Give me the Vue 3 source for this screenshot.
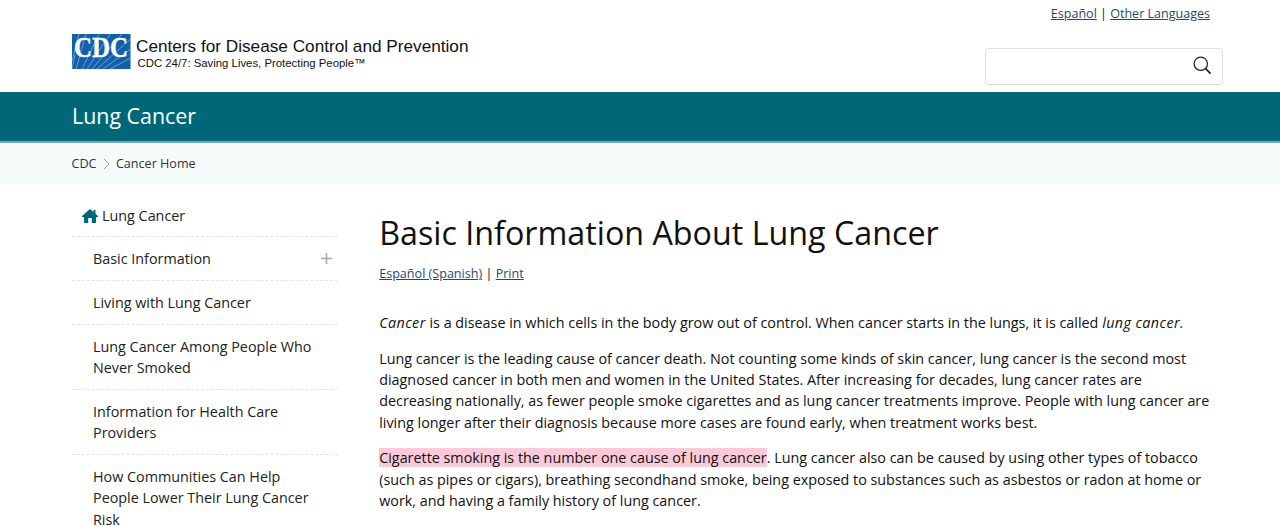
<script setup>
import { ref } from 'vue';

const query = ref('');

const navItems = [
  { id: 1, title: 'Basic Information', expandable: true },
  { id: 2, title: 'Living with Lung Cancer' },
  { id: 3, title: 'Lung Cancer Among People Who Never Smoked' },
  { id: 4, title: 'Information for Health Care Providers' },
  { id: 5, title: 'How Communities Can Help People Lower Their Lung Cancer Risk' },
];
</script>

<template>
  <div class="page">
    <header class="header">
      <svg class="logo" width="400" height="40" viewBox="0 0 400 40">
        <rect x="0" y="2" width="58.5" height="35" fill="#1160ae" />
        <g stroke="#8fb9df" stroke-width="0.7">
          <path d="M4 37L14 2M10 37L27 2M15 37L38 2M20 37L50 2M25 37L58.5 7M31 37L58.5 17M38 37L58.5 26M0 29L7 2M0 37L3 23" />
        </g>
        <text class="logo-mark" x="2" y="24.500" textLength="54" lengthAdjust="spacingAndGlyphs">CDC</text>
        <text class="logo-name" x="64" y="19.500" textLength="332.500" lengthAdjust="spacingAndGlyphs">Centers for Disease Control and Prevention</text>
        <text class="logo-tag" x="65.500" y="35" textLength="228" lengthAdjust="spacingAndGlyphs">CDC 24/7: Saving Lives, Protecting People™</text>
      </svg>
      <div class="header-right">
        <div class="languages"><a href="#">Español</a> | <a href="#">Other Languages</a></div>
        <div class="search">
          <input v-model="query" type="text" aria-label="Search">
          <svg width="19" height="19" viewBox="0 0 20 20" fill="none" stroke="#222" stroke-width="1.3">
            <circle cx="8.200" cy="8.200" r="7" />
            <path d="M13 13L18.500 18.500" stroke-width="1.8" />
          </svg>
        </div>
      </div>
    </header>

    <div class="site-title">Lung Cancer</div>
    <nav class="breadcrumb">
      <span>CDC</span>
      <svg width="7" height="12" viewBox="0 0 7 12" fill="none" stroke="#999">
        <path d="M1 1L6 6L1 11" />
      </svg>
      <span>Cancer Home</span>
    </nav>

    <div class="columns">
      <aside class="sidebar">
        <div class="nav-home">
          <svg width="16" height="14" viewBox="0 0 16 14" fill="#006777">
            <path d="M8 0L0 7V8H2V14H6.200V9H9.800V14H14V8H16V7L13.500 4.800V1H11.500V3Z" />
          </svg>
          <span>Lung Cancer</span>
        </div>
        <div v-for="item in navItems" :key="item.id" class="nav-item">
          <span>{{ item.title }}</span>
          <svg v-if="item.expandable" width="11" height="11" viewBox="0 0 11 11" stroke="#aaa" stroke-width="1.600">
            <path d="M5.500 0V11M0 5.500H11" />
          </svg>
        </div>
      </aside>

      <main class="content">
        <h1>Basic Information About Lung Cancer</h1>
        <div class="page-links"><a href="#">Español (Spanish)</a> | <a href="#">Print</a></div>
        <p><em>Cancer</em> is a disease in which cells in the body grow out of control. When cancer starts in the lungs, it is called <em>lung cancer.</em></p>
        <p>Lung cancer is the leading cause of cancer death. Not counting some kinds of skin cancer, lung cancer is the second most diagnosed cancer in both men and women in the United States. After increasing for decades, lung cancer rates are decreasing nationally, as fewer people smoke cigarettes and as lung cancer treatments improve. People with lung cancer are living longer after their diagnosis because more cases are found early, when treatment works best.</p>
        <p><mark>Cigarette smoking is the number one cause of lung cancer</mark>. Lung cancer also can be caused by using other types of tobacco (such as pipes or cigars), breathing secondhand smoke, being exposed to substances such as asbestos or radon at home or work, and having a family history of lung cancer.</p>
      </main>
    </div>
  </div>
</template>

<style>
body {
  margin: 0;
  overflow: hidden;
}
</style>

<style scoped>
.page {
  height: 526px;
  overflow: hidden;
  background: #fff;
  color: #111;
  font-family: "Open Sans", sans-serif;
  font-size: 14.35px;
  line-height: 21.4px;
}

a {
  color: #1c4a70;
  text-decoration: underline;
}

.header {
  display: flex;
  justify-content: space-between;
  height: 92px;
  box-sizing: border-box;
  padding: 0 57px 0 72px;
}

.logo {
  margin-top: 32px;
}

.logo-mark {
  font-family: "Liberation Serif", serif;
  font-size: 30px;
  font-weight: bold;
  fill: #fff;
  stroke: #fff;
  stroke-width: 0.4px;
}

.logo-name {
  font-family: "Liberation Sans", sans-serif;
  font-size: 17px;
  fill: #111;
}

.logo-tag {
  font-family: "Liberation Sans", sans-serif;
  font-size: 11.5px;
  fill: #111;
}

.header-right {
  width: 238px;
}

.languages {
  padding: 3px 13px 0 0;
  height: 45px;
  box-sizing: border-box;
  font-size: 12.54px;
  text-align: right;
}

.search {
  display: flex;
  align-items: center;
  height: 37px;
  box-sizing: border-box;
  margin-top: 3px;
  padding: 0 10px 3px 0;
  border: 1px solid #dcdcdc;
  border-radius: 4px;
}

.search input {
  flex: 1;
  min-width: 0;
  border: 0;
  outline: none;
  background: transparent;
}

.site-title {
  height: 51px;
  box-sizing: border-box;
  padding: 8px 72px;
  border-bottom: 2px solid #6fa9b3;
  background: #006778;
  color: #fff;
  font-size: 21.4px;
  line-height: 31px;
}

.breadcrumb {
  display: flex;
  align-items: center;
  gap: 6.200px;
  height: 41px;
  padding: 0 71.5px;
  background: #f6fbfc;
  color: #333;
  font-size: 12.6px;
}

.columns {
  display: flex;
  gap: 41.200px;
  padding: 0 67.5px 0 72px;
}

.sidebar {
  width: 266px;
  flex: none;
  padding-top: 11px;
  color: #222;
}

.nav-home {
  display: flex;
  align-items: center;
  gap: 4px;
  height: 41px;
  padding-left: 10px;
}

.nav-item {
  display: flex;
  justify-content: space-between;
  padding: 11px 6px 10.350px 21px;
  border-top: 1px dashed #e3e3e3;
}

.nav-item span {
  width: 222px;
}

.nav-item svg {
  margin-top: 5px;
}

.content {
  flex: 1;
  min-width: 0;
}

h1 {
  margin: 27px 0 0;
  font-size: 32.25px;
  font-weight: 400;
  line-height: 43px;
}

.page-links {
  margin: 9px 0 28px;
  font-size: 12.58px;
}

p {
  margin: 0 0 14.200px;
  line-height: 21.3px;
}

em {
  letter-spacing: 0.4px;
}

mark {
  background: #fbc9d8;
  color: inherit;
}
</style>
